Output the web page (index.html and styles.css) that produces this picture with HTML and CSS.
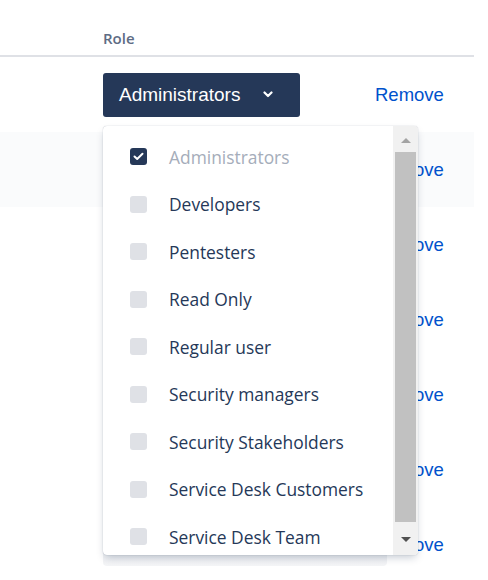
FILE: index.html
```html
<!DOCTYPE html>
<html>
<head>
<meta charset="utf-8">
<link rel="stylesheet" href="styles.css">
</head>
<body>
<div class="page">
  <div class="table">
    <div class="thead">
      <div class="c-name"></div>
      <div class="c-role th">Role</div>
      <div class="c-act"></div>
    </div>
    <div class="row">
      <div class="c-name"></div>
      <div class="c-role">
        <button class="role-btn"><span>Administrators</span>
          <svg class="chev" width="10" height="7" viewBox="0 0 10 7"><path d="M1.5 1.5 L5 5 L8.5 1.5" fill="none" stroke="#fff" stroke-width="2.2" stroke-linecap="round" stroke-linejoin="round"/></svg>
        </button>
      </div>
      <div class="c-act"><a class="remove">Remove</a></div>
    </div>
    <div class="row hl"><div class="c-name"></div><div class="c-role"></div><div class="c-act"><a class="remove">Remove</a></div></div>
    <div class="row"><div class="c-name"></div><div class="c-role"></div><div class="c-act"><a class="remove">Remove</a></div></div>
    <div class="row"><div class="c-name"></div><div class="c-role"></div><div class="c-act"><a class="remove">Remove</a></div></div>
    <div class="row"><div class="c-name"></div><div class="c-role"></div><div class="c-act"><a class="remove">Remove</a></div></div>
    <div class="row"><div class="c-name"></div><div class="c-role"></div><div class="c-act"><a class="remove">Remove</a></div></div>
    <div class="row"><div class="c-name"></div><div class="c-role"></div><div class="c-act"><a class="remove">Remove</a></div></div>
  </div>

  <div class="menu-shadow"></div>
  <div class="menu">
    <ul class="options">
      <li class="opt disabled"><span class="cb checked"><svg width="11" height="9" viewBox="0 0 11 9"><path d="M1.5 4.5 L4.2 7 L9.5 1.8" fill="none" stroke="#fff" stroke-width="2" stroke-linecap="round" stroke-linejoin="round"/></svg></span>Administrators</li>
      <li class="opt"><span class="cb"></span>Developers</li>
      <li class="opt"><span class="cb"></span>Pentesters</li>
      <li class="opt"><span class="cb"></span>Read Only</li>
      <li class="opt"><span class="cb"></span>Regular user</li>
      <li class="opt"><span class="cb"></span>Security managers</li>
      <li class="opt"><span class="cb"></span>Security Stakeholders</li>
      <li class="opt"><span class="cb"></span>Service Desk Customers</li>
      <li class="opt"><span class="cb"></span>Service Desk Team</li>
    </ul>
    <div class="scrollbar">
      <span class="arrow up"></span>
      <span class="thumb"></span>
      <span class="arrow down"></span>
    </div>
  </div>
</div>
</body>
</html>
```

FILE: styles.css
```css
html, body {
  margin: 0;
  padding: 0;
  background: #fff;
}
.page {
  position: relative;
  width: 488px;
  height: 580px;
  overflow: hidden;
  font-family: "Open Sans", "Liberation Sans", sans-serif;
}
.table {
  width: 474px;
}
.thead, .row {
  display: grid;
  grid-template-columns: 103px 272px 1fr;
}
.thead {
  height: 55px;
  border-bottom: 2px solid #dfe1e6;
  align-items: end;
}
.th {
  font-size: 15px;
  font-weight: 600;
  color: #5e6c84;
  padding-bottom: 7px;
}
.row {
  height: 75px;
  align-items: center;
}
.row.hl {
  background: #fafbfc;
}
.role-btn {
  display: flex;
  align-items: center;
  width: 197px;
  height: 44px;
  padding: 0 0 0 16px;
  border: 0;
  border-radius: 3px;
  background: #253858;
  color: #fff;
  font-family: "Liberation Sans", Arial, sans-serif;
  font-size: 19px;
  cursor: pointer;
}
.chev {
  margin-left: 23px;
}
.remove {
  font-family: "Liberation Sans", Arial, sans-serif;
  font-size: 18.5px;
  color: #0052cc;
  cursor: pointer;
}
.menu-shadow {
  position: absolute;
  left: 103px;
  top: 530px;
  width: 284px;
  height: 36px;
  border-radius: 4px;
  background: linear-gradient(#e4e6ea, #f4f5f7);
}
.menu {
  position: absolute;
  left: 103px;
  top: 126px;
  width: 315px;
  height: 429px;
  background: #fff;
  border-radius: 4px;
  box-shadow: 0 4px 8px -2px rgba(9, 30, 66, 0.25), 0 0 1px rgba(9, 30, 66, 0.35);
  display: flex;
  overflow: hidden;
}
.options {
  list-style: none;
  margin: 0;
  padding: 7px 0 0 0;
  flex: 1;
}
.opt {
  display: flex;
  align-items: center;
  height: 47.5px;
  padding-left: 27px;
  font-size: 17.4px;
  color: #253858;
}
.opt.disabled {
  color: #a5adba;
}
.cb {
  width: 17px;
  height: 17px;
  border-radius: 3px;
  background: #dfe1e6;
  margin-right: 22px;
  display: flex;
  align-items: center;
  justify-content: center;
  flex-shrink: 0;
}
.cb.checked {
  background: #253858;
}
.scrollbar {
  width: 25px;
  background: #f1f1f1;
  display: flex;
  flex-direction: column;
  align-items: center;
  flex-shrink: 0;
}
.arrow {
  width: 0;
  height: 0;
  border-left: 5px solid transparent;
  border-right: 5px solid transparent;
}
.arrow.up {
  margin-top: 12px;
  border-bottom: 5px solid #a3a3a3;
}
.arrow.down {
  margin-top: 15px;
  border-top: 5px solid #505050;
}
.thumb {
  width: 21px;
  height: 370px;
  margin-top: 9px;
  background: #c1c1c1;
}
```
